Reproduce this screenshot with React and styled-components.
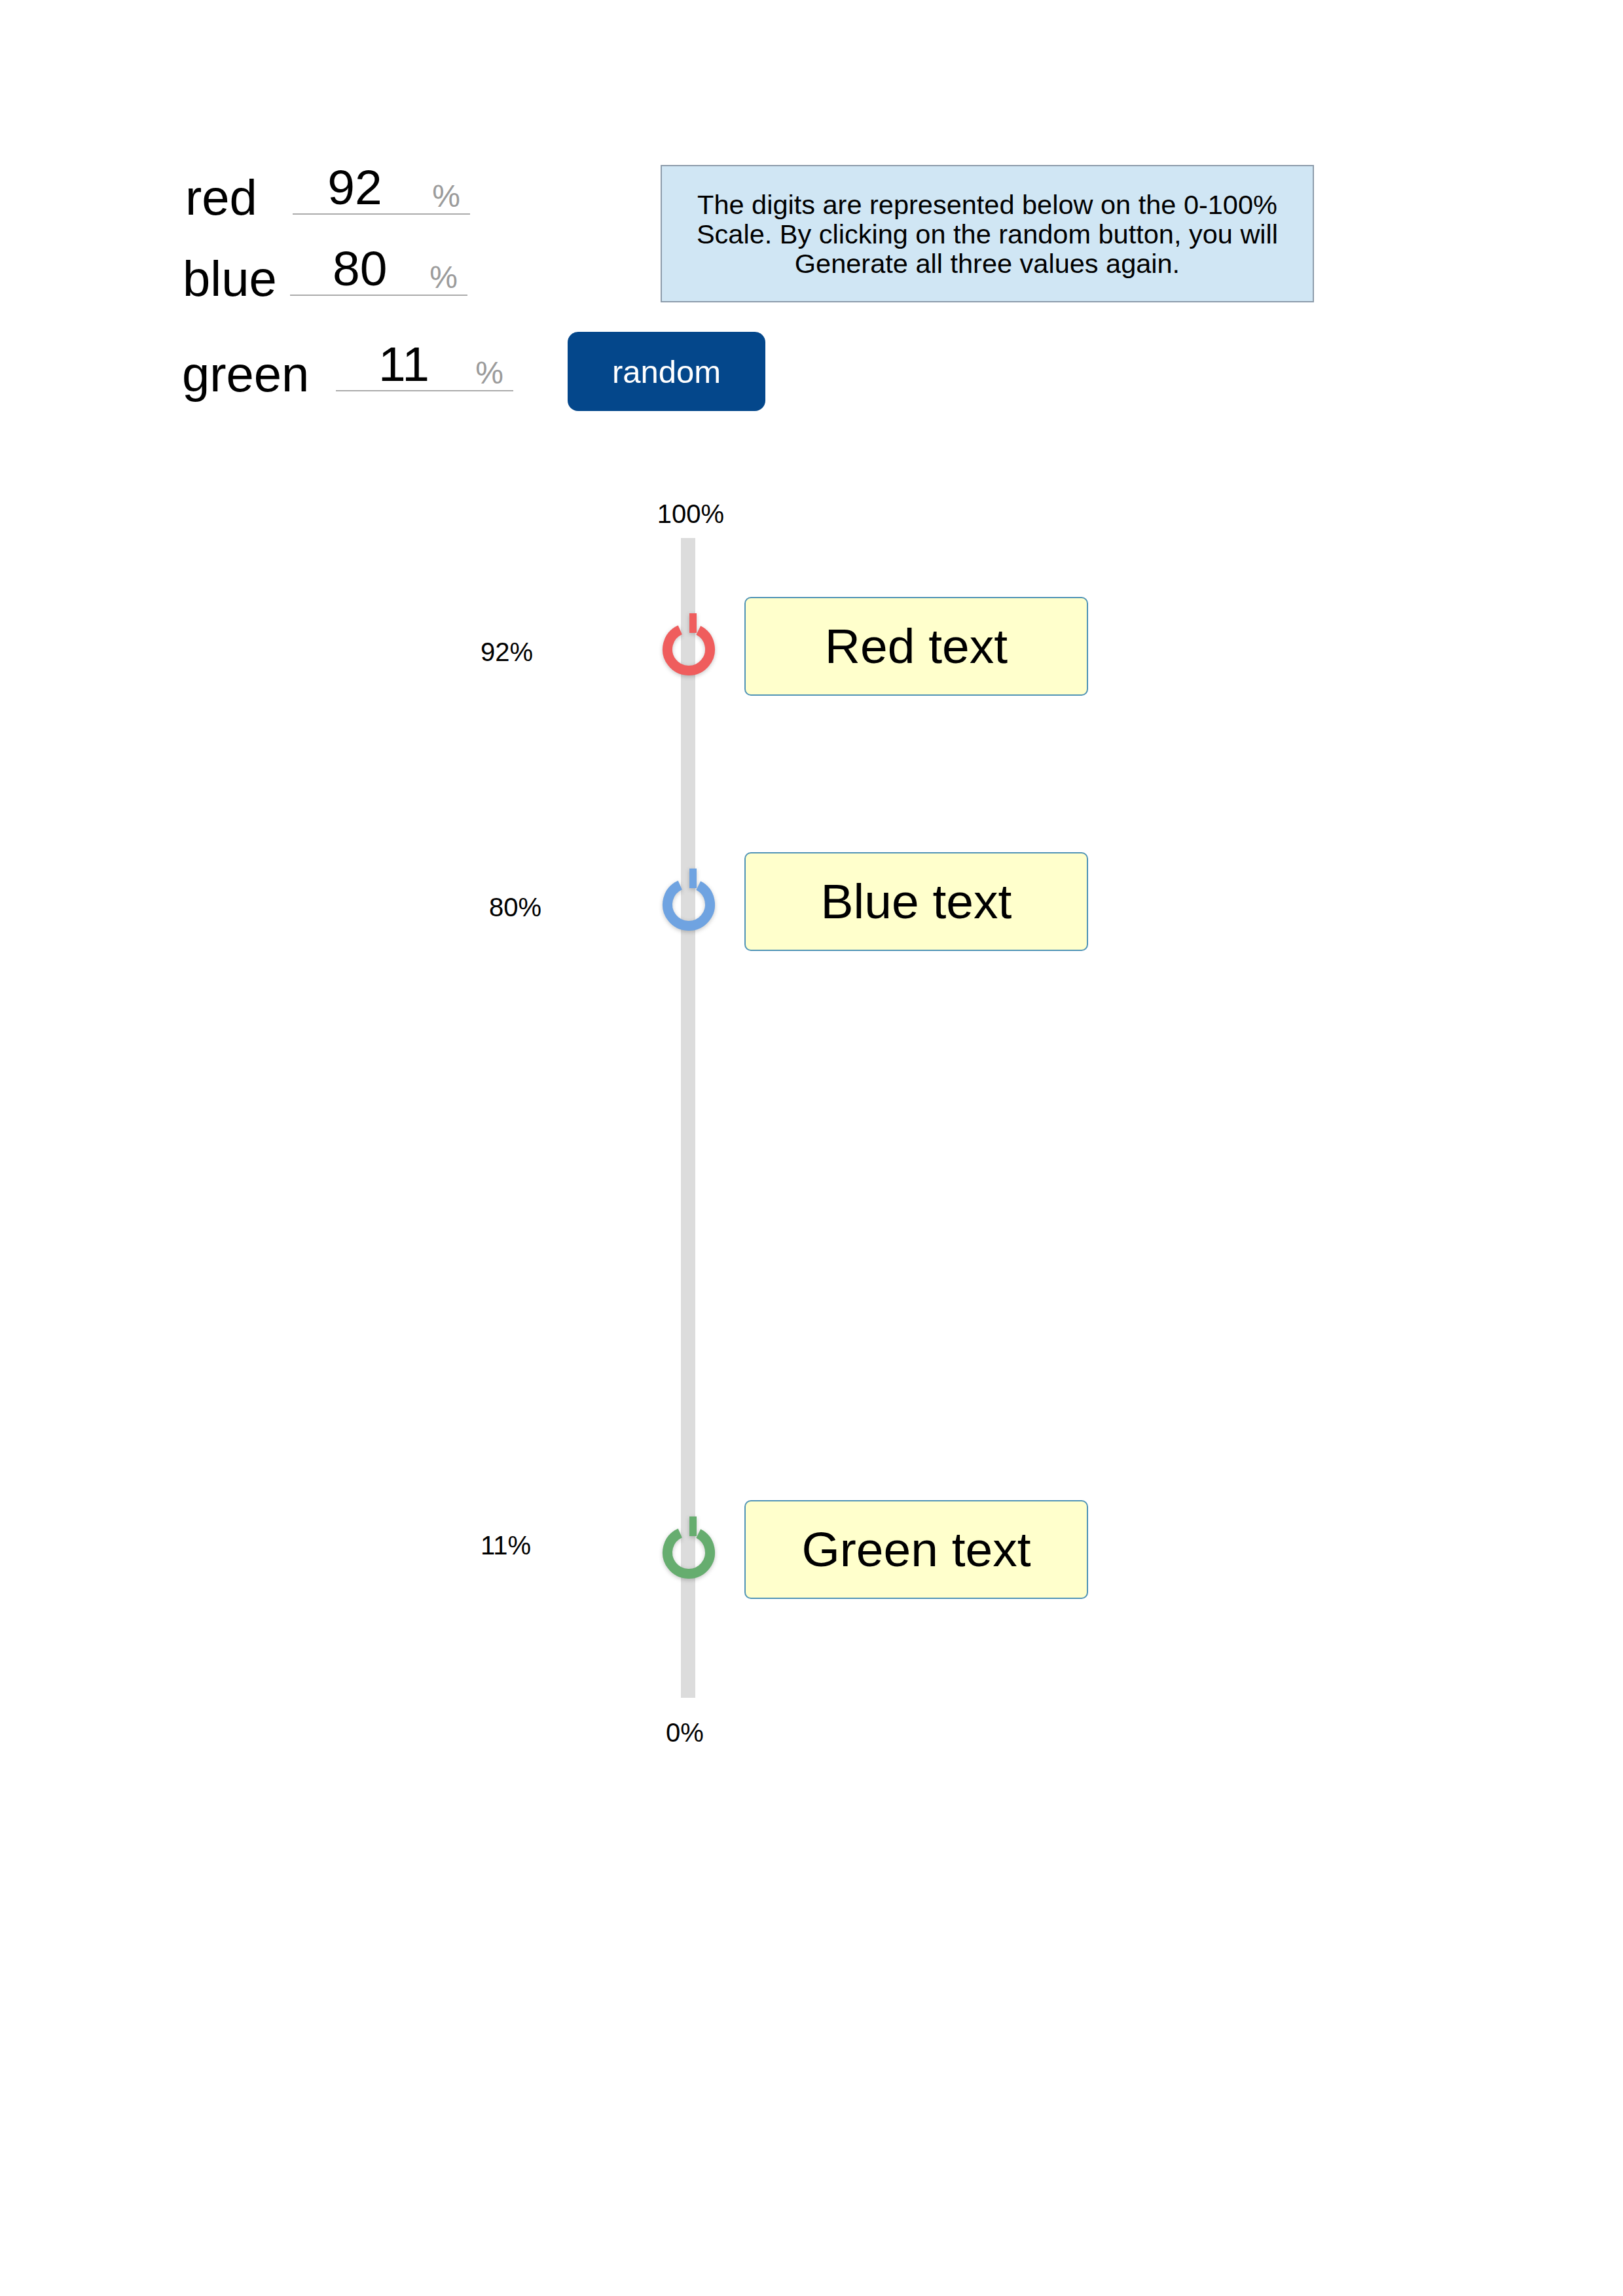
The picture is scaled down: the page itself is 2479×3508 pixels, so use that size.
import React from "react";
import styled, { createGlobalStyle } from "styled-components";

const Global = createGlobalStyle`
  html, body { margin: 0; padding: 0; background: #ffffff; }
  body { font-family: "Liberation Sans", Arial, sans-serif; color: #000; }
`;

const Page = styled.div`
  width: 2479px;
  min-height: 3508px;
  background: #ffffff;
`;

const Header = styled.div`
  display: flex;
  align-items: flex-start;
  padding: 247px 0 0 278px;
`;

const Inputs = styled.div`
  flex: none;
  width: 589px;
  display: flex;
  flex-direction: column;
`;

const InputRow = styled.div`
  display: flex;
  align-items: flex-end;
  margin-top: ${(p) => p.$mt}px;
`;

const ColorLabel = styled.div`
  flex: none;
  width: ${(p) => p.$w}px;
  box-sizing: border-box;
  padding-left: ${(p) => p.$pad}px;
  font-size: 76px;
  line-height: 52px;
`;

const Field = styled.div`
  flex: none;
  width: 271px;
  box-sizing: border-box;
  display: flex;
  align-items: flex-end;
  justify-content: space-between;
  padding-right: 15px;
  border-bottom: 2px solid #ababab;
`;

const Num = styled.span`
  width: ${(p) => p.$w}px;
  text-align: center;
  font-size: 75px;
  line-height: 79px;
`;

const Unit = styled.span`
  font-size: 48px;
  line-height: 53px;
  color: #9b9b9b;
`;

const Side = styled.div`
  display: flex;
  flex-direction: column;
  align-items: flex-start;
  margin-top: 5px;
`;

const InfoBox = styled.div`
  margin-left: 142px;
  width: 998px;
  height: 210px;
  box-sizing: border-box;
  border: 2px solid #8d9cab;
  background: #d0e6f4;
  display: flex;
  align-items: center;
  justify-content: center;
  text-align: center;
  font-size: 41.5px;
  line-height: 45px;
`;

const RandomButton = styled.button`
  margin-top: 45px;
  width: 302px;
  height: 121px;
  border: none;
  border-radius: 16px;
  background: #04478b;
  color: #ffffff;
  font-family: "Liberation Sans", Arial, sans-serif;
  font-size: 49px;
  padding: 0;
  cursor: pointer;
`;

const Scale = styled.div`
  margin-top: 137px;
  display: flex;
  flex-direction: column;
`;

const EndCap = styled.div`
  width: 200px;
  margin-left: ${(p) => 951 + p.$dx}px;
  margin-top: ${(p) => p.$mt}px;
  text-align: center;
  font-size: 40px;
  line-height: 40px;
`;

const TrackArea = styled.div`
  margin-top: 17px;
  height: 1772px;
  display: flex;
  flex-direction: column;
  background-image: linear-gradient(#dcdcdc, #dcdcdc);
  background-repeat: no-repeat;
  background-size: 22px 100%;
  background-position: 1040px 0;
`;

const Marker = styled.div`
  display: flex;
  align-items: center;
  height: 151px;
  margin-top: ${(p) => p.$mt}px;
`;

const PctLabel = styled.div`
  flex: none;
  width: 1004px;
  box-sizing: border-box;
  padding-left: ${(p) => p.$x}px;
  margin-top: ${(p) => p.$dy * 2}px;
  font-size: 40px;
  line-height: 40px;
`;

const KnobWrap = styled.div`
  flex: none;
  width: 96px;
  height: 120px;
  margin-top: 8px;
  filter: drop-shadow(0 2px 3px rgba(0, 0, 0, 0.22));
`;

const TextBox = styled.div`
  flex: none;
  margin-left: 37px;
  width: 525px;
  height: 151px;
  box-sizing: border-box;
  border: 2px solid #5094b6;
  border-radius: 10px;
  background: #ffffcc;
  display: flex;
  align-items: center;
  justify-content: center;
  font-size: 75px;
  line-height: 1;
`;

function Knob({ color }) {
  return (
    <KnobWrap>
      <svg width="96" height="120" viewBox="0 0 96 120">
        <path
          d="M 62.75 31.04 A 32.5 32.5 0 1 1 34.78 30.31"
          fill="none"
          stroke={color}
          strokeWidth="15"
        />
        <rect x="49" y="5" width="11" height="30" fill={color} />
      </svg>
    </KnobWrap>
  );
}

const inputs = [
  { label: "red", value: 92, labelW: 169, pad: 5, numW: 190, mt: 0 },
  { label: "blue", value: 80, labelW: 165, pad: 1, numW: 218, mt: 43 },
  { label: "green", value: 11, labelW: 235, pad: 0, numW: 208, mt: 65 },
];

const markers = [
  { pct: "92%", text: "Red text", color: "#ef5d5d", mt: 90, x: 734, dy: 8 },
  { pct: "80%", text: "Blue text", color: "#6fa3e1", mt: 239, x: 747, dy: 8 },
  { pct: "11%", text: "Green text", color: "#66ad6f", mt: 839, x: 734, dy: -7 },
];

export default function App() {
  return (
    <Page>
      <Global />
      <Header>
        <Inputs>
          {inputs.map((r) => (
            <InputRow key={r.label} $mt={r.mt}>
              <ColorLabel $w={r.labelW} $pad={r.pad}>{r.label}</ColorLabel>
              <Field>
                <Num $w={r.numW}>{r.value}</Num>
                <Unit>%</Unit>
              </Field>
            </InputRow>
          ))}
        </Inputs>
        <Side>
          <InfoBox>
            <div>
              The digits are represented below on the 0-100%
              <br />
              Scale. By clicking on the random button, you will
              <br />
              Generate all three values again.
            </div>
          </InfoBox>
          <RandomButton type="button">random</RandomButton>
        </Side>
      </Header>
      <Scale>
        <EndCap $dx={4} $mt={0}>100%</EndCap>
        <TrackArea>
          {markers.map((m) => (
            <Marker key={m.pct} $mt={m.mt}>
              <PctLabel $x={m.x} $dy={m.dy}>{m.pct}</PctLabel>
              <Knob color={m.color} />
              <TextBox>{m.text}</TextBox>
            </Marker>
          ))}
        </TrackArea>
        <EndCap $dx={-5} $mt={33}>0%</EndCap>
      </Scale>
    </Page>
  );
}
